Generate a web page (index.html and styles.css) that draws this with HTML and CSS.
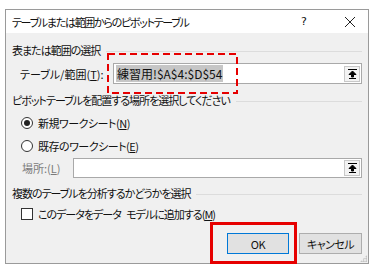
FILE: index.html
```html
<!DOCTYPE html>
<html lang="ja">
<head>
    <meta charset="UTF-8">
    <title>テーブルまたは範囲からのピボットテーブル</title>
    <link rel="stylesheet" href="styles.css">
</head>
<body>
    <div class="dialog">
        <div class="title-bar">
            <span class="title">テーブルまたは範囲からのピボットテーブル</span>
            <span class="help">?</span>
            <span class="close">
                <svg width="12" height="12" viewBox="0 0 12 12"><path d="M1 1L11 11M11 1L1 11" stroke="#222" stroke-width="1"/></svg>
            </span>
        </div>

        <div class="body">
            <!-- source range -->
            <div class="group-label">表または範囲の選択</div>
            <div class="field-row">
                <span class="field-label">テーブル/範囲(<u>T</u>):</span>
                <div class="input range-input">
                    <span class="value"><span class="selected">練習用!$A$4:$D$54</span></span>
                    <span class="collapse-btn">
                        <svg width="9" height="10" viewBox="0 0 9 10"><path d="M0 0.5H9M4.5 2L1 5.5H3.5V8H5.5V5.5H8Z M1 9.5H8" stroke="#000" stroke-width="1" fill="#000"/></svg>
                    </span>
                </div>
            </div>

            <!-- destination -->
            <div class="group-label">ピボットテーブルを配置する場所を選択してください</div>
            <label class="option">
                <span class="radio checked"></span>
                <span class="option-text">新規ワークシート(<u>N</u>)</span>
            </label>
            <label class="option">
                <span class="radio"></span>
                <span class="option-text">既存のワークシート(<u>E</u>)</span>
            </label>
            <div class="field-row location-row">
                <span class="field-label disabled">場所:(<u>L</u>)</span>
                <div class="input location-input">
                    <span class="value"></span>
                    <span class="collapse-btn">
                        <svg width="9" height="10" viewBox="0 0 9 10"><path d="M0 0.5H9M4.5 2L1 5.5H3.5V8H5.5V5.5H8Z M1 9.5H8" stroke="#000" stroke-width="1" fill="#000"/></svg>
                    </span>
                </div>
            </div>

            <!-- data model -->
            <div class="group-label">複数のテーブルを分析するかどうかを選択</div>
            <label class="option check-option">
                <span class="checkbox"></span>
                <span class="check-text">このデータをデータ モデルに追加する(<u>M</u>)</span>
            </label>

            <div class="buttons">
                <button class="btn default">OK</button>
                <button class="btn">キャンセル</button>
            </div>
        </div>

        <div class="grip"></div>

        <!-- annotations -->
        <svg class="mark-dashed" width="131" height="41" viewBox="0 0 131 41">
            <rect x="1" y="1" width="129" height="39" fill="none" stroke="#e60000" stroke-width="2" stroke-dasharray="7 4"/>
        </svg>
        <div class="mark-solid"></div>
    </div>
</body>
</html>
```

FILE: styles.css
```css
body {
    margin: 0;
    background: #fff;
    font-family: "Noto Sans CJK JP", "Noto Sans", sans-serif;
    font-size: 11px;
    letter-spacing: -1px;
    font-feature-settings: "palt";
    color: #111;
}
.dialog {
    position: relative;
    margin: 9px 0 0 5px;
    width: 362px;
    height: 253px;
    border: 1px solid #9a9a9a;
    background: #f0f0f0;
    display: flex;
    flex-direction: column;
}
.title-bar {
    height: 23px;
    background: #fff;
    display: flex;
    align-items: center;
    padding-left: 6px;
    line-height: 16px;
}
.title {
    flex: 1;
    letter-spacing: -1.3px;
}
.help {
    width: 12px;
    margin-right: 34px;
    text-align: center;
    font-family: "DejaVu Sans", sans-serif;
    font-size: 11px;
    letter-spacing: 0;
}
.close {
    display: flex;
    margin-right: 12px;
}
.body {
    flex: 1;
    padding: 9px 6px 0 6px;
    display: flex;
    flex-direction: column;
}
.group-label {
    height: 16px;
    line-height: 16px;
    display: flex;
    align-items: center;
    gap: 6px;
}
.group-label::after {
    content: "";
    flex: 1;
    height: 1px;
    background: #dcdcdc;
    margin-top: 2px;
}
.field-row {
    display: flex;
    align-items: center;
    height: 21px;
    margin-top: 5px;
    margin-bottom: 8px;
}
.field-label {
    width: 101px;
    padding-left: 8px;
    box-sizing: border-box;
    line-height: 16px;
    letter-spacing: 0;
}
.field-label.disabled {
    color: #7a7a7a;
    width: 61px;
    padding-left: 10px;
}
.input {
    flex: 1;
    height: 100%;
    box-sizing: border-box;
    border: 1px solid #a9a9a9;
    background: #fff;
    display: flex;
    align-items: center;
    padding: 0 1px 0 2px;
}
.value {
    flex: 1;
    line-height: 15px;
}
.selected {
    background: #c6c6c6;
    font-size: 12px;
    letter-spacing: 0;
    padding: 0 1px;
}
.collapse-btn {
    width: 16px;
    height: 16px;
    box-sizing: border-box;
    border: 1px solid #c8c8c8;
    background: #f3f3f3;
    display: flex;
    align-items: center;
    justify-content: center;
}
.option {
    height: 16px;
    margin-top: 7px;
    display: flex;
    align-items: center;
    gap: 5px;
    padding-left: 9px;
    line-height: 16px;
}
.option-text {
    letter-spacing: -0.5px;
}
.check-text {
    word-spacing: 4px;
}
.radio {
    width: 12px;
    height: 12px;
    box-sizing: border-box;
    border: 1px solid #333;
    border-radius: 50%;
    background: #fff;
    display: flex;
    align-items: center;
    justify-content: center;
}
.radio.checked::after {
    content: "";
    width: 6px;
    height: 6px;
    border-radius: 50%;
    background: #222;
}
.location-row {
    height: 20px;
    margin-top: 4px;
    margin-bottom: 7px;
}
.check-option {
    margin-top: 5px;
}
.checkbox {
    width: 12px;
    height: 12px;
    box-sizing: border-box;
    border: 1px solid #333;
    background: #fff;
}
.buttons {
    display: flex;
    justify-content: flex-end;
    gap: 10px;
    margin-top: 11px;
}
.btn {
    width: 63px;
    height: 21px;
    font: inherit;
    letter-spacing: -0.5px;
    color: #111;
    background: #e1e1e1;
    border: 1px solid #adadad;
    padding: 0;
    line-height: 16px;
}
.btn.default {
    width: 62px;
    border-color: #0078d7;
}
.grip {
    position: absolute;
    right: 1px;
    bottom: 1px;
    width: 7px;
    height: 7px;
    background: radial-gradient(circle, #bcbcbc 0.8px, transparent 1px) 0 0 / 2.5px 2.5px;
    clip-path: polygon(100% 0, 100% 100%, 0 100%);
}
.mark-dashed {
    position: absolute;
    left: 101px;
    top: 43px;
}
.mark-solid {
    position: absolute;
    left: 204px;
    top: 212px;
    width: 87px;
    height: 42px;
    box-sizing: border-box;
    border: 3px solid #e60000;
}
```
